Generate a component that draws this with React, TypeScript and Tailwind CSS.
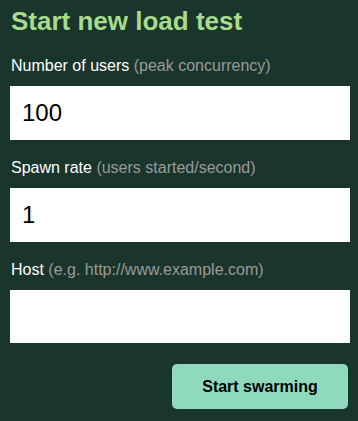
import React from "react";

export default function App() {
  return (
    <div
      className="w-[358px] h-[421px] bg-[#1a352b] px-[10px] pt-[6px]"
      style={{ fontFamily: '"Liberation Sans", Arial, sans-serif' }}
    >
      <h2 className="text-[26px] font-bold text-[#a6dc8c] leading-[30px] pl-px">
        Start new load test
      </h2>
      <form className="flex flex-col mt-[20px]" onSubmit={(e) => e.preventDefault()}>
        <label className="text-[16px] leading-[20px] text-white pl-px">
          Number of users <span className="text-[#9a9a9a]">(peak concurrency)</span>
        </label>
        <input
          className="mt-[10px] h-[54px] w-[340px] bg-white text-black text-[24px] px-[12px] outline-none"
          defaultValue="100"
        />
        <label className="mt-[18px] text-[16px] leading-[20px] text-white pl-px">
          Spawn rate <span className="text-[#9a9a9a]">(users started/second)</span>
        </label>
        <input
          className="mt-[10px] h-[54px] w-[340px] bg-white text-black text-[24px] px-[12px] outline-none"
          defaultValue="1"
        />
        <label className="mt-[18px] text-[16px] leading-[20px] text-white pl-px">
          Host <span className="text-[#9a9a9a]">(e.g. http://www.example.com)</span>
        </label>
        <input
          className="mt-[10px] h-[53px] w-[340px] bg-white text-black text-[24px] px-[12px] outline-none"
          defaultValue=""
        />
        <div className="flex justify-end mt-[21px]">
          <button
            type="submit"
            className="w-[176px] h-[45px] rounded-[5px] bg-[#8fd9bd] text-black text-[16px] font-bold"
          >
            Start swarming
          </button>
        </div>
      </form>
    </div>
  );
}
